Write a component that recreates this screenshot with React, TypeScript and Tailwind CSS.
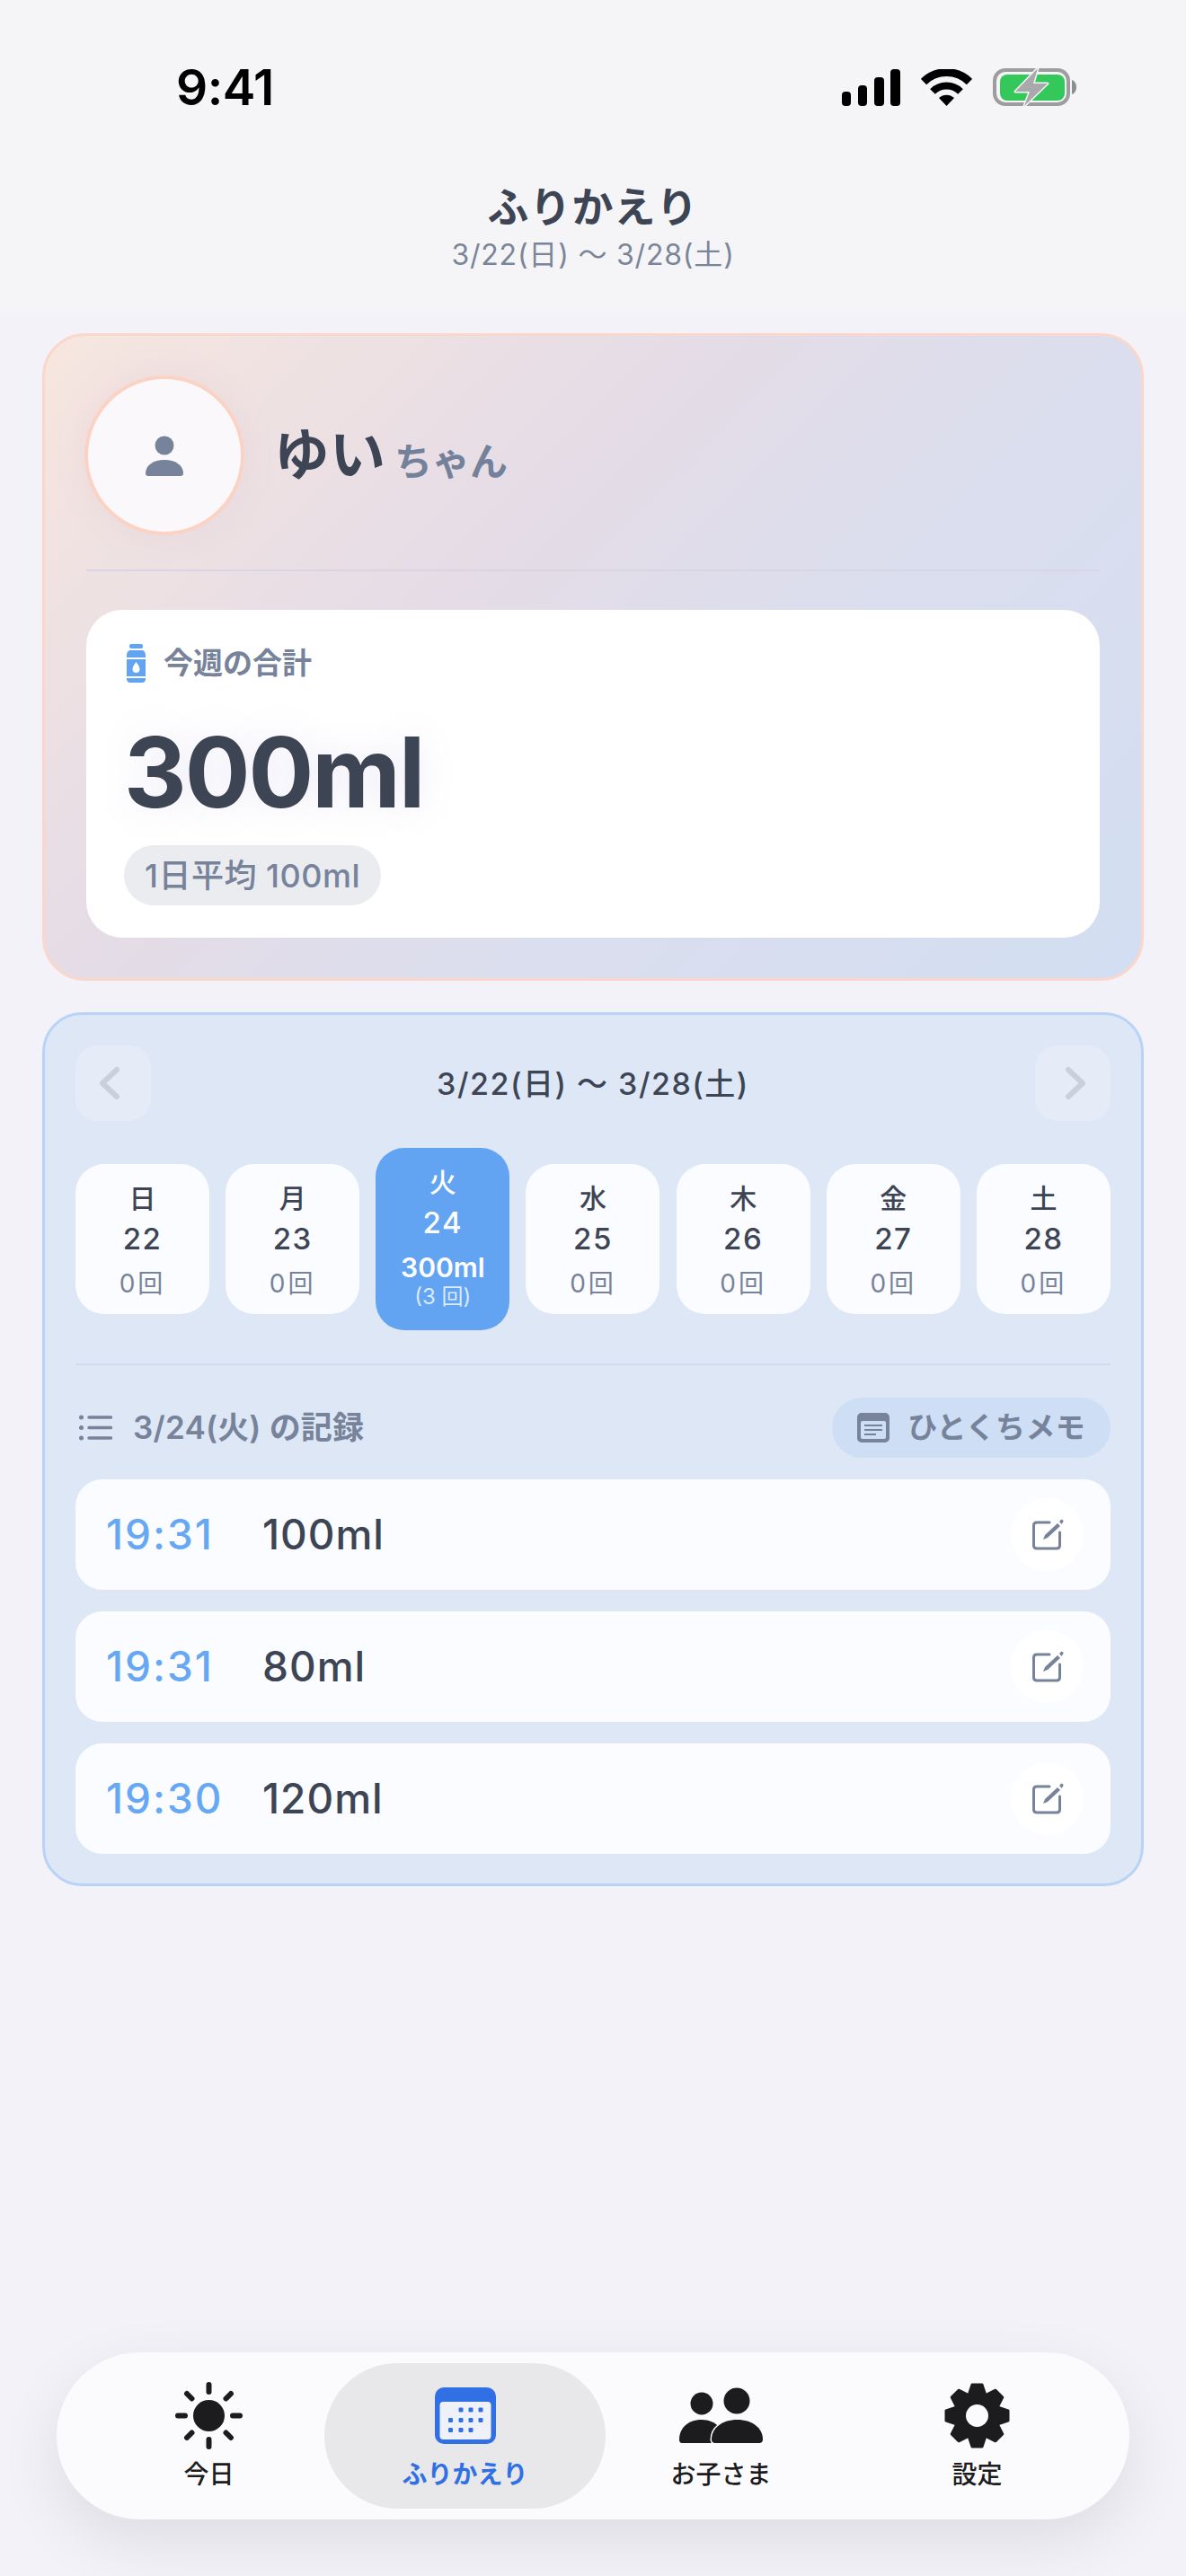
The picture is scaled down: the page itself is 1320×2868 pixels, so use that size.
const days = [
  { label: '日', date: '22' },
  { label: '月', date: '23' },
  { label: '火', date: '24', total: '300ml', count: '(3 回)' },
  { label: '水', date: '25' },
  { label: '木', date: '26' },
  { label: '金', date: '27' },
  { label: '土', date: '28' },
];

const records = [
  { time: '19:31', amount: '100ml' },
  { time: '19:31', amount: '80ml' },
  { time: '19:30', amount: '120ml' },
];

function StatusIcons() {
  return (
    <div className="flex items-center">
      <svg width="65" height="41" viewBox="0 0 65 41" className="block">
        <rect x="0" y="25" width="10" height="16" rx="4" fill="#000" />
        <rect x="18" y="18" width="10" height="23" rx="4" fill="#000" />
        <rect x="36" y="9" width="11" height="32" rx="4" fill="#000" />
        <rect x="54" y="0" width="11" height="41" rx="4" fill="#000" />
      </svg>
      <svg width="57" height="41" viewBox="0 0 57 41" className="ml-[23px] block">
        <path d="M28.5 41 L20 32 A12.5 12.5 0 0 1 37 32 Z" fill="#000" />
        <path d="M13 25 A22 22 0 0 1 44 25" fill="none" stroke="#000" strokeWidth="8" />
        <path d="M3 14 A36.5 36.5 0 0 1 54 14" fill="none" stroke="#000" strokeWidth="9" />
      </svg>
      <svg width="93" height="44" viewBox="0 0 93 44" className="ml-[23px] block">
        <rect x="2" y="3" width="82" height="38" rx="12" fill="none" stroke="#9d9d9f" strokeWidth="4" />
        <rect x="8" y="8" width="72" height="29" rx="8" fill="#34c759" />
        <path d="M88 14 C91 15 93 18 93 22 C93 26 91 29 88 30 Z" fill="#8e8e90" />
        <path
          d="M50 1 L25 27 L41 27 L35 43 L61 18 L45 18 Z"
          fill="#a9a9ab"
          stroke="#f5f5f7"
          strokeWidth="3"
          strokeLinejoin="round"
          paintOrder="stroke"
        />
      </svg>
    </div>
  );
}

function BottleIcon() {
  return (
    <svg width="21" height="43" viewBox="0 0 21 43" className="block">
      <rect x="3" y="0" width="15" height="5" rx="2" fill="#62a3f2" />
      <path d="M3 7 H18 C20 8 21 10 21 13 V15 H0 V13 C0 10 1 8 3 7 Z" fill="#62a3f2" />
      <rect x="0" y="17" width="21" height="19" fill="#62a3f2" />
      <path d="M10.5 20 C12.5 23 14.5 25 14.5 28 A4 4 0 0 1 6.5 28 C6.5 25 8.5 23 10.5 20 Z" fill="#fff" />
      <path d="M0 38 H21 V39 C21 41.5 19.5 43 17 43 H4 C1.5 43 0 41.5 0 39 Z" fill="#62a3f2" />
    </svg>
  );
}

function PersonIcon() {
  return (
    <svg width="42" height="45" viewBox="0 0 42 45" className="block">
      <circle cx="21" cy="11" r="10.5" fill="#76839a" />
      <path d="M0 42 C0 33 9 27 21 27 C33 27 42 33 42 42 C42 44 41 45 39 45 H3 C1 45 0 44 0 42 Z" fill="#76839a" />
    </svg>
  );
}

function ListIcon() {
  return (
    <svg width="37" height="29" viewBox="0 0 37 29" className="block">
      <circle cx="2.5" cy="3" r="2.5" fill="#76839a" />
      <circle cx="2.5" cy="14.5" r="2.5" fill="#76839a" />
      <circle cx="2.5" cy="26" r="2.5" fill="#76839a" />
      <path d="M11 3 H35.5 M11 14.5 H35.5 M11 26 H35.5" stroke="#76839a" strokeWidth="3.4" strokeLinecap="round" />
    </svg>
  );
}

function MemoIcon() {
  return (
    <svg width="36" height="33" viewBox="0 0 36 33" className="block">
      <rect x="0" y="0" width="36" height="33" rx="5" fill="#76839a" />
      <rect x="4" y="9" width="28" height="20" rx="2" fill="#cddef5" />
      <path d="M8 14 H28 M8 19 H28 M8 24 H21" stroke="#76839a" strokeWidth="2" />
    </svg>
  );
}

function EditIcon() {
  return (
    <svg width="36" height="35" viewBox="0 0 36 35" className="ml-[3px] block">
      <path
        d="M19 4 H5 C2.8 4 1.5 5.3 1.5 7.5 V29.5 C1.5 31.7 2.8 33 5 33 H27 C29.2 33 30.5 31.7 30.5 29.5 V15"
        fill="none"
        stroke="#76839a"
        strokeWidth="3"
        strokeLinecap="round"
      />
      <path d="M12 23 L14 18 L28 5 L31 8 L17 21 Z" fill="#76839a" />
      <path d="M30 3 L32 1 C33 0 35 2 34.5 3 L32.5 6 Z" fill="#76839a" />
    </svg>
  );
}

function SunIcon() {
  return (
    <svg width="75" height="75" viewBox="0 0 75 75" className="block">
      <circle cx="37.5" cy="37.5" r="17.5" fill="#1c1c1e" />
      <path
        d="M37.5 3 V11 M37.5 64 V72 M3 37.5 H11 M64 37.5 H72 M13 13 L18.5 18.5 M56.5 56.5 L62 62 M13 62 L18.5 56.5 M56.5 18.5 L62 13"
        stroke="#1c1c1e"
        strokeWidth="6"
        strokeLinecap="round"
      />
    </svg>
  );
}

function CalendarIcon() {
  const dots = [
    [29, 25], [40, 25], [51, 25],
    [17.5, 36.5], [29, 36.5], [40, 36.5], [51, 36.5],
    [17.5, 47.5], [29, 47.5], [40, 47.5],
  ];
  return (
    <svg width="68" height="63" viewBox="0 0 68 63" className="block">
      <rect x="0" y="0" width="68" height="63" rx="10" fill="#3170e4" />
      <rect x="5.5" y="16" width="57" height="42" rx="4" fill="#eef1f8" />
      {dots.map(([x, y]) => (
        <rect key={`${x}-${y}`} x={x - 2.5} y={y - 2.5} width="5" height="5" rx="1.2" fill="#3170e4" />
      ))}
    </svg>
  );
}

function PeopleIcon() {
  return (
    <svg width="93" height="62" viewBox="0 0 93 62" className="block">
      <circle cx="25" cy="18" r="12.5" fill="#1c1c1e" />
      <circle cx="64" cy="15" r="14.5" fill="#1c1c1e" />
      <path d="M0 58 C0 45 10 36 25 36 C33 36 40 39 44 44 V62 H3 C1 62 0 60.5 0 58 Z" fill="#1c1c1e" />
      <path
        d="M36 58 C36 45 48 36 64.5 36 C81 36 93 45 93 58 C93 60.5 91.5 62 89 62 H40 C37.5 62 36 60.5 36 58 Z"
        fill="#1c1c1e"
        stroke="#fbfbfd"
        strokeWidth="3"
        paintOrder="stroke"
      />
    </svg>
  );
}

function GearIcon() {
  const angles = [0, 45, 90, 135, 180, 225, 270, 315];
  return (
    <svg width="73" height="73" viewBox="-36.5 -36.5 73 73" className="block">
      {angles.map((a) => (
        <path
          key={a}
          d="M-9 -24 L-5.5 -34.5 H5.5 L9 -24 Z"
          fill="#1c1c1e"
          stroke="#1c1c1e"
          strokeWidth="3"
          strokeLinejoin="round"
          transform={`rotate(${a})`}
        />
      ))}
      <circle r="26" fill="#1c1c1e" />
      <circle r="12.5" fill="#fbfbfd" />
    </svg>
  );
}

export default function App() {
  return (
    <div className="flex h-[2868px] w-[1320px] flex-col overflow-hidden bg-[#f3f2f8] font-['Inter','Noto_Sans_CJK_JP',sans-serif] text-[#3d4555]">
      <header className="h-[348px] bg-[#f5f5f7]">
        <div className="flex items-center justify-between pl-[196px] pr-[122px] pt-[74px]">
          <span className="text-[55px] font-semibold leading-[46px] tracking-[-0.5px] text-black">9:41</span>
          <StatusIcons />
        </div>
        <div className="mt-[84px] flex flex-col items-center">
          <h1 className="text-[46px] font-bold leading-[52px] tracking-[1px]">ふりかえり</h1>
          <p className="mt-[8px] text-[32px] leading-[40px] tracking-[0.8px] text-[#7a8599]">3/22(日) 〜 3/28(土)</p>
        </div>
      </header>

      <main className="flex flex-col gap-[35px] px-[47px] pt-[23px]">
        <section className="h-[721px] rounded-[48px] border-[3px] border-[#fad7ca] bg-[linear-gradient(135deg,#f7e6df_0%,#e5dce6_37%,#dbdeee_63%,#d2def2_100%)] px-[46px] pt-[44px]">
          <div className="flex items-center gap-[33px]">
            <div className="-ml-[2px] flex h-[178px] w-[178px] items-center justify-center rounded-full border-4 border-[#fbd3c4] bg-[#fbf8fb] shadow-[0_0_40px_rgba(150,110,170,0.08)]">
              <PersonIcon />
            </div>
            <div className="flex items-baseline gap-[10px]">
              <span className="text-[62px] font-bold leading-[70px]">ゆい</span>
              <span className="text-[42px] font-semibold leading-[50px] text-[#73819a]">ちゃん</span>
            </div>
          </div>
          <div className="mt-[38px] h-[2px] bg-[#d9d5e2]" />
          <div className="mt-[43px] h-[365px] rounded-[40px] bg-white px-[42px] pt-[37px]">
            <div className="flex items-center gap-[20px] pl-[3px]">
              <BottleIcon />
              <span className="text-[33px] font-semibold leading-[44px] text-[#76839a]">今週の合計</span>
            </div>
            <p className="mt-[40px] text-[108px] font-bold leading-[120px] tracking-[-2px] [text-shadow:0_0_40px_rgba(140,120,200,0.15)]">300ml</p>
            <span className="mt-[21px] inline-flex h-[67px] items-center rounded-full bg-[#ebecf0] px-[23px] text-[36px] font-medium tracking-[0.5px] text-[#76839a]">1日平均 100ml</span>
          </div>
        </section>

        <section className="h-[973px] rounded-[44px] border-[3px] border-[#b9d3f6] bg-[#dde7f5] px-[34px] pt-[34px]">
          <div className="flex items-center justify-between">
            <div className="flex h-[84px] w-[84px] items-center justify-center rounded-[24px] bg-[#e5ecf7]">
              <svg width="24" height="38" viewBox="0 0 24 38" className="mr-[8px]"><path d="M20 4 L4 19 L20 34" fill="none" stroke="#c9d0dc" strokeWidth="6" strokeLinecap="round" strokeLinejoin="round" /></svg>
            </div>
            <span className="text-[34px] font-medium tracking-[1.5px]">3/22(日) 〜 3/28(土)</span>
            <div className="flex h-[84px] w-[84px] items-center justify-center rounded-[24px] bg-[#e5ecf7]">
              <svg width="24" height="38" viewBox="0 0 24 38" className="ml-[6px]"><path d="M4 4 L20 19 L4 34" fill="none" stroke="#c9d0dc" strokeWidth="6" strokeLinecap="round" strokeLinejoin="round" /></svg>
            </div>
          </div>

          <div className="mt-[30px] flex items-center justify-between">
            {days.map((d) =>
              d.total ? (
                <div key={d.date} className="flex h-[203px] w-[149px] flex-col items-center rounded-[32px] bg-[#62a3f2] pt-[18px] text-white">
                  <span className="text-[30px] font-medium leading-[40px]">{d.label}</span>
                  <span className="mt-[5px] text-[33px] font-medium leading-[40px] tracking-[1.5px]">{d.date}</span>
                  <span className="mt-[12px] text-[30px] font-semibold leading-[36px]">{d.total}</span>
                  <span className="text-[24px] leading-[30px] text-[#dbeafe]">{d.count}</span>
                </div>
              ) : (
                <div key={d.date} className="flex h-[167px] w-[149px] flex-col items-center rounded-[32px] bg-[#fbfcff] pt-[18px]">
                  <span className="text-[30px] font-medium leading-[40px]">{d.label}</span>
                  <span className="mt-[5px] text-[33px] font-medium leading-[40px] tracking-[1.5px]">{d.date}</span>
                  <span className="mt-[12px] text-[28px] leading-[36px] tracking-[3px] text-[#76839a]">0回</span>
                </div>
              ),
            )}
          </div>

          <div className="mt-[37px] h-[2px] bg-[#cfdcee]" />

          <div className="mt-[36px] flex items-center justify-between">
            <div className="flex items-center gap-[23px] pl-[4px]">
              <ListIcon />
              <span className="text-[35px] font-semibold tracking-[0.2px] text-[#76839a]">3/24(火) の記録</span>
            </div>
            <div className="flex h-[67px] items-center gap-[20px] rounded-full bg-[#cddef5] pl-[28px] pr-[28px]">
              <MemoIcon />
              <span className="text-[33px] font-semibold tracking-[0.3px] text-[#76839a]">ひとくちメモ</span>
            </div>
          </div>

          <ul className="mt-[24px] flex flex-col gap-[24px]">
            {records.map((r, i) => (
              <li key={i} className="flex h-[123px] items-center justify-between rounded-[30px] bg-[#fbfcff] pl-[34px] pr-[30px]">
                <div className="flex items-center gap-[48px]">
                  <span className="w-[126px] whitespace-nowrap text-[46px] font-medium tracking-[2px] text-[#67a8f5]">{r.time}</span>
                  <span className="text-[46px] font-medium tracking-[1px]">{r.amount}</span>
                </div>
                <div className="flex h-[81px] w-[81px] items-center justify-center rounded-full bg-white">
                  <EditIcon />
                </div>
              </li>
            ))}
          </ul>
        </section>
      </main>

      <nav className="mx-[63px] mt-[519px] flex h-[186px] items-center rounded-full bg-[#fbfbfd] px-[27px] text-[#1c1c1e] shadow-[0_24px_70px_rgba(0,0,0,0.09)]">
        <div className="flex w-[285px] flex-col items-center">
          <div className="flex h-[75px] items-center"><SunIcon /></div>
          <span className="mt-[10px] text-[28px] font-medium leading-[36px]">今日</span>
        </div>
        <div className="-mx-[14px] flex h-[162px] w-[313px] flex-col items-center justify-center rounded-full bg-[#e8e8ea] text-[#3170e4]">
          <div className="flex h-[75px] items-center"><CalendarIcon /></div>
          <span className="mt-[10px] text-[28px] font-semibold leading-[36px]">ふりかえり</span>
        </div>
        <div className="flex w-[285px] flex-col items-center">
          <div className="flex h-[75px] items-center"><PeopleIcon /></div>
          <span className="mt-[10px] text-[28px] font-medium leading-[36px]">お子さま</span>
        </div>
        <div className="flex w-[285px] flex-col items-center">
          <div className="flex h-[75px] items-center"><GearIcon /></div>
          <span className="mt-[10px] text-[28px] font-medium leading-[36px]">設定</span>
        </div>
      </nav>
    </div>
  );
}
